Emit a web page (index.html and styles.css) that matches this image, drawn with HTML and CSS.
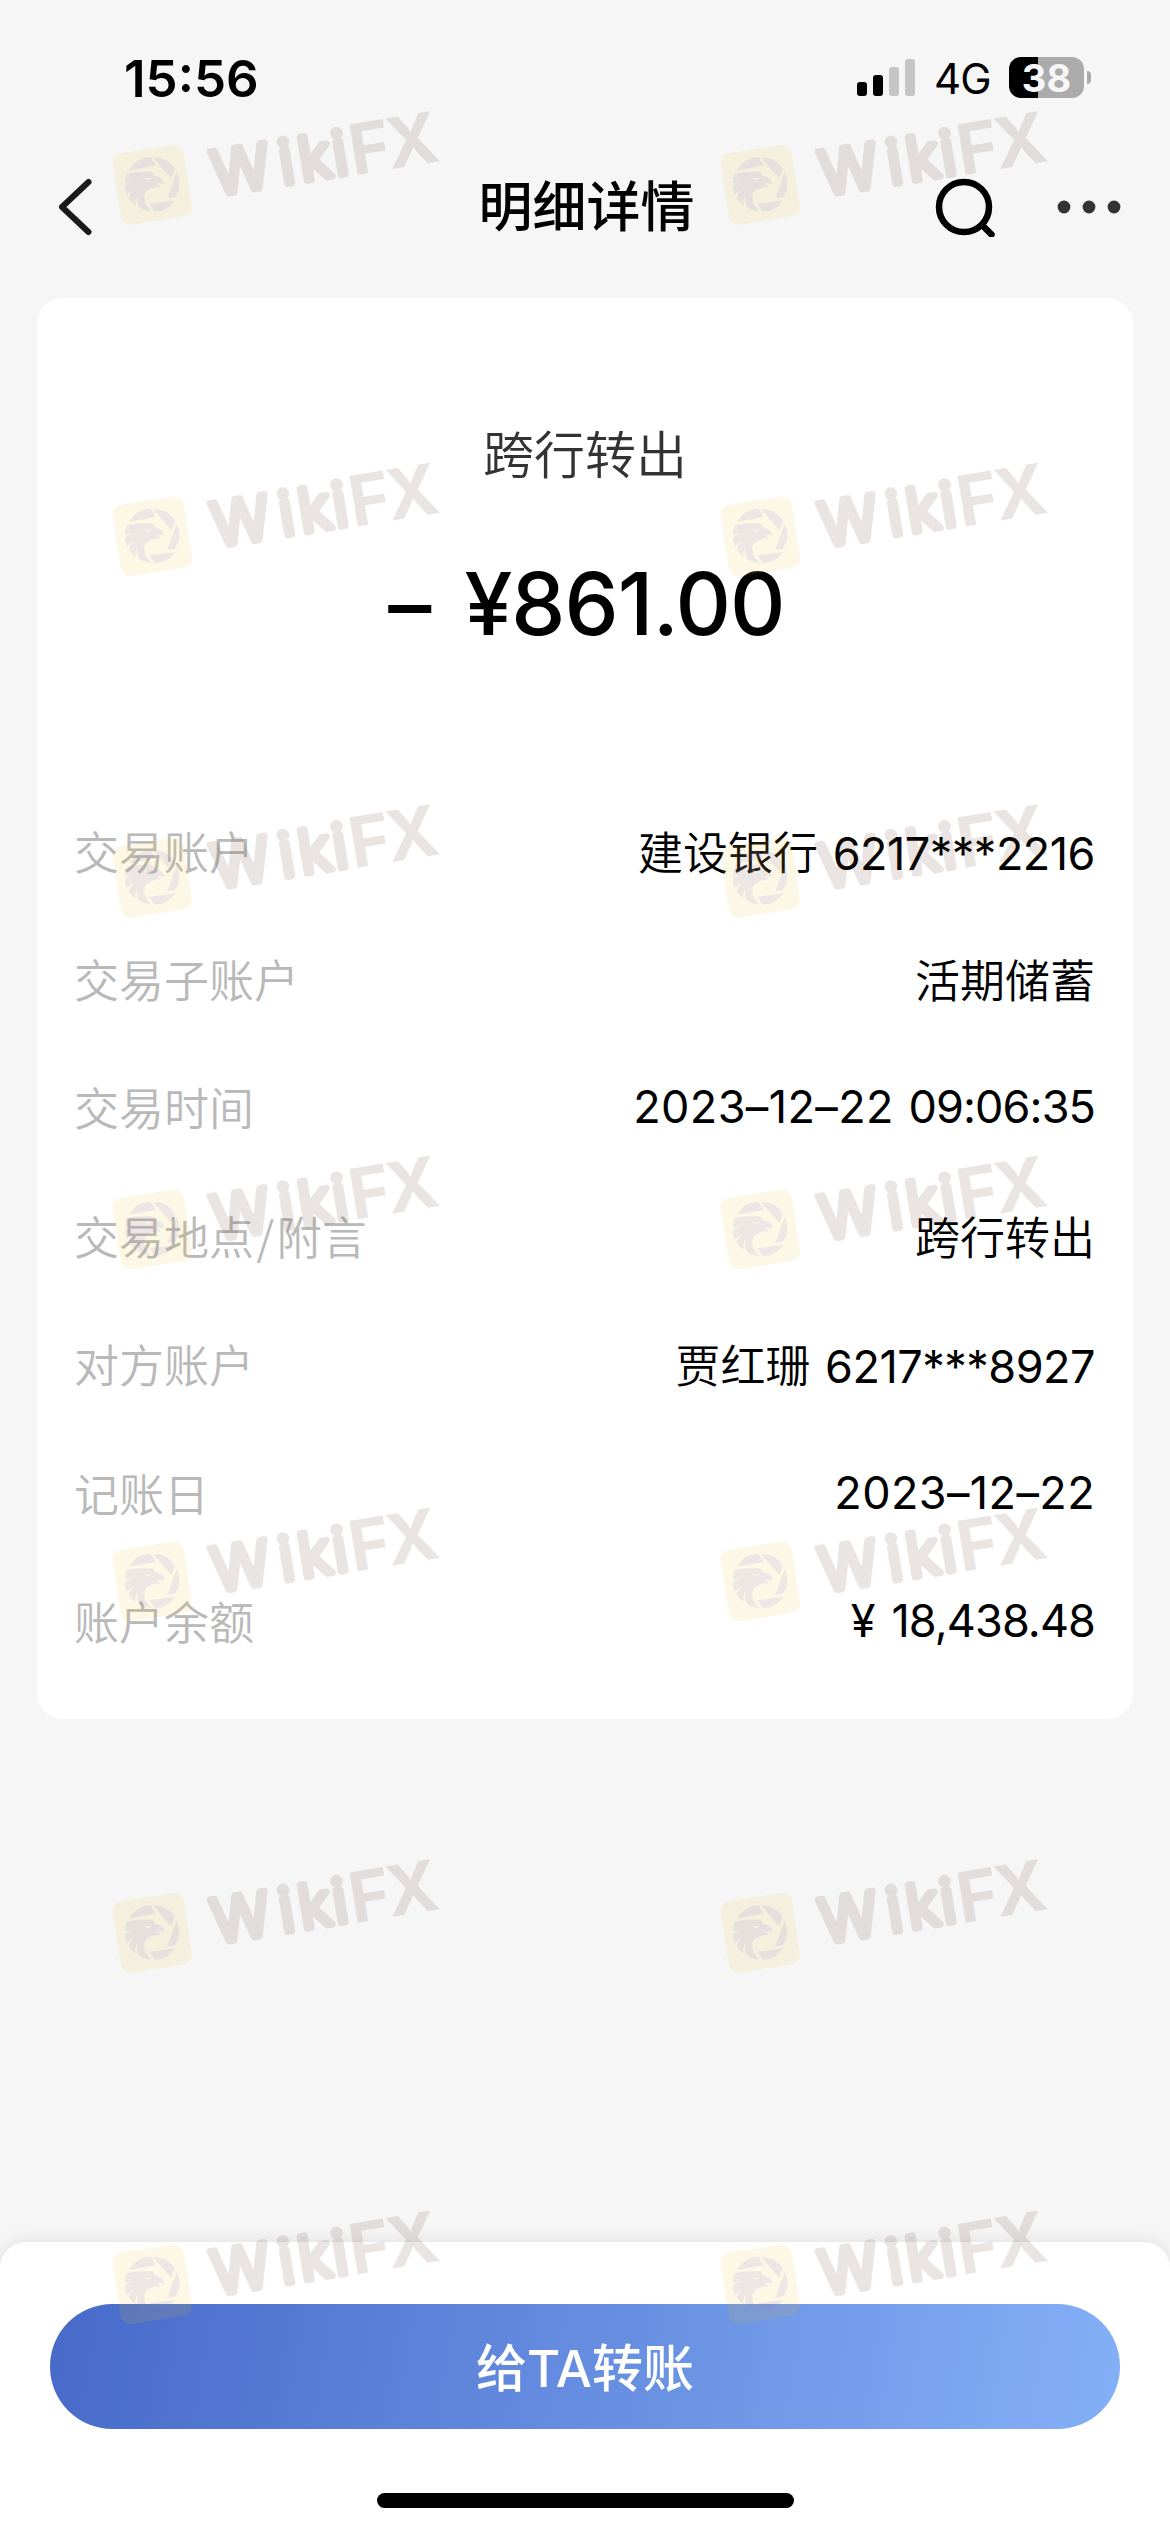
FILE: index.html
```html
<!DOCTYPE html>
<html lang="zh-CN">
<head>
    <meta charset="UTF-8">
    <title>明细详情</title>
    <link rel="stylesheet" href="styles.css">
</head>
<body>
    <div class="status-bar">
        <span class="time">15:56</span>
        <div class="status-icons">
            <svg class="signal" width="58" height="38" viewBox="0 0 58 38">
                <rect x="0" y="23" width="10" height="14" rx="3" />
                <rect x="16" y="16" width="10" height="21" rx="3" />
                <rect class="off" x="32" y="8" width="10" height="29" rx="3" />
                <rect class="off" x="48" y="0" width="10" height="37" rx="3" />
            </svg>
            <span class="network">4G</span>
            <div class="battery">
                <span class="battery-level">38</span>
            </div>
            <span class="battery-nub"></span>
        </div>
    </div>

    <div class="nav-bar">
        <svg class="back" width="60" height="60" viewBox="0 0 60 60">
            <path d="M38.5 5L12 30l26.5 25" />
        </svg>
        <h1>明细详情</h1>
        <div class="nav-actions">
            <svg class="search" width="60" height="60" viewBox="0 0 60 60">
                <circle cx="29" cy="30" r="25" />
                <path d="M48.5 49.5l8 8" />
            </svg>
            <svg class="more" width="64" height="60" viewBox="0 0 64 60">
                <circle cx="7" cy="30" r="6.4" />
                <circle cx="32" cy="30" r="6.4" />
                <circle cx="57" cy="30" r="6.4" />
            </svg>
        </div>
    </div>

    <div class="card">
        <p class="card-type">跨行转出</p>
        <p class="card-amount"><span>–</span><span>¥861.00</span></p>

        <div class="details">
            <div class="row">
                <span class="label">交易账户</span>
                <span class="value">建设银行 <b class="account">6217***2216</b></span>
            </div>
            <div class="row">
                <span class="label">交易子账户</span>
                <span class="value">活期储蓄</span>
            </div>
            <div class="row">
                <span class="label">交易时间</span>
                <span class="value"><b class="date">2023–12–22</b> <b class="clock">09:06:35</b></span>
            </div>
            <div class="row">
                <span class="label">交易地点<i>/</i>附言</span>
                <span class="value">跨行转出</span>
            </div>
            <div class="row">
                <span class="label">对方账户</span>
                <span class="value">贾红珊 <b class="account">6217***8927</b></span>
            </div>
            <div class="row">
                <span class="label">记账日</span>
                <span class="value"><b class="date">2023–12–22</b></span>
            </div>
            <div class="row">
                <span class="label">账户余额</span>
                <span class="value"><b class="money">¥ 18,438.48</b></span>
            </div>
        </div>
    </div>

    <div class="footer">
        <button class="transfer-btn">给TA转账</button>
        <div class="home-indicator"></div>
    </div>

    <!-- Watermark layer -->
    <svg class="watermark" width="1170" height="2532" viewBox="0 0 1170 2532">
        <defs>
            <g id="mark">
                <g transform="scale(0.33333)">
                    <rect class="tile" x="-108" y="-108" width="216" height="216" rx="30" transform="translate(157 259) rotate(-9)" />
                    <g class="ink">
                        <path d="M88 216Q107 178 152 176L167 201Z" />
                        <path d="M159 177Q206 178 224 212L214 240Z" />
                        <path d="M230 222Q249 262 225 296L202 299Z" />
                        <path d="M225 306Q202 340 164 339L148 316Z" />
                        <path d="M79 227C100 219 130 219 155 220Q166 224 162 232C177 232 191 243 193 257Q181 252 170 256L179 262L180 266C158 264 136 274 133 290C129 308 142 326 154 339Q134 338 119 328C111 316 109 304 114 292C105 302 104 312 108 322Q94 312 86 298Q90 284 104 272Q88 279 80 290Q75 276 75 264Q84 253 98 249Q86 250 76 255Q75 240 79 227Z" />
                    </g>
                    <path class="eye" d="M130 236Q143 240 155 238Q149 246 141 244Z" />
                    <g transform="translate(381 298) rotate(-9.3)">
                        <text class="word round" x="-33 172 231 334" y="-13">Wiki</text>
                        <text class="word" x="385 498" y="-5">FX</text>
                    </g>
                </g>
            </g>
        </defs>
        <use href="#mark" x="100" y="98.5" />
        <use href="#mark" x="708" y="98.5" />
        <use href="#mark" x="100" y="450" />
        <use href="#mark" x="708" y="450" />
        <use href="#mark" x="100" y="791.5" />
        <use href="#mark" x="708" y="791.5" />
        <use href="#mark" x="100" y="1143" />
        <use href="#mark" x="708" y="1143" />
        <use href="#mark" x="100" y="1495" />
        <use href="#mark" x="708" y="1495" />
        <use href="#mark" x="100" y="1846.5" />
        <use href="#mark" x="708" y="1846.5" />
        <use href="#mark" x="100" y="2198" />
        <use href="#mark" x="708" y="2198" />
    </svg>
</body>
</html>
```
FILE: styles.css
```css
* {
    margin: 0;
    padding: 0;
    box-sizing: border-box;
}

body {
    position: relative;
    display: flex;
    flex-direction: column;
    width: 1170px;
    height: 2532px;
    overflow: hidden;
    background: #f6f6f6;
    color: #000;
    font-family: Inter, "Noto Sans CJK SC", sans-serif;
}

.status-bar {
    display: flex;
    justify-content: space-between;
    height: 155px;
    padding: 0 79px 0 124px;
}

.time {
    height: 155px;
    line-height: 157px;
    font-size: 51px;
    font-weight: 600;
}

.status-icons {
    display: flex;
    align-items: center;
    height: 155px;
}

.signal .off {
    fill: #c5c5c5;
}

.network {
    width: 56px;
    margin: 2px 19px 0 19px;
    font-size: 42px;
    letter-spacing: -0.9px;
    white-space: nowrap;
}

.battery {
    width: 75px;
    height: 41px;
    border-radius: 12px;
    background: linear-gradient(90deg, #000 29px, #ababab 29px);
    text-align: center;
}

.battery-level {
    display: block;
    line-height: 42px;
    font-size: 38px;
    font-weight: 700;
    color: #f6f6f6;
}

.battery-nub {
    width: 4px;
    height: 13px;
    margin-left: 3px;
    border-radius: 0 4px 4px 0;
    background: #ababab;
}

.nav-bar {
    display: flex;
    align-items: center;
    justify-content: space-between;
    height: 104px;
    padding: 0 49px 0 50px;
}

.back {
    margin-right: 128px;
    fill: none;
    stroke: #1a1a1a;
    stroke-width: 6;
    stroke-linecap: round;
    stroke-linejoin: round;
}

.nav-bar h1 {
    font-size: 54px;
    line-height: 104px;
    font-weight: 500;
    margin-top: 2px;
}

.nav-actions {
    display: flex;
    gap: 62px;
}

.search {
    fill: none;
    stroke: #000;
    stroke-width: 6.5;
    stroke-linecap: round;
}

.more {
    fill: #333;
}

.card {
    height: 1421px;
    margin: 39px 37px 0;
    padding: 120px 38px 0;
    border-radius: 26px;
    background: #fff;
}

.card-type {
    height: 76px;
    line-height: 76px;
    text-align: center;
    font-size: 51px;
    font-weight: 350;
    color: #333;
}

.card-amount {
    display: flex;
    justify-content: center;
    gap: 34px;
    height: 110px;
    margin-top: 55px;
    padding-left: 3px;
    line-height: 110px;
    font-size: 86px;
    font-weight: 500;
    letter-spacing: -0.9px;
}

.details {
    margin-top: 127px;
}

.row {
    display: flex;
    align-items: center;
    justify-content: space-between;
    height: 128.4px;
    font-size: 45px;
}

.label {
    margin-left: -1px;
    color: #b9b9b9;
    font-family: "Noto Sans CJK SC", sans-serif;
    font-weight: 350;
}

.label i {
    padding: 0 2.5px;
    font-style: normal;
}

.value {
    font-weight: 350;
    word-spacing: 2px;
}

.value b {
    font-weight: 375;
}

.account {
    letter-spacing: -0.5px;
}

.date {
    letter-spacing: 0.4px;
}

.clock {
    letter-spacing: -0.9px;
}

.money {
    letter-spacing: -0.9px;
    word-spacing: 5px;
}

.footer {
    height: 290px;
    margin-top: auto;
    padding: 62px 50px 0;
    border-radius: 26px 26px 0 0;
    background: #fff;
    box-shadow: 0 0 20px rgba(0, 0, 0, 0.1);
}

.transfer-btn {
    display: block;
    width: 100%;
    height: 125px;
    padding-bottom: 4px;
    border: none;
    border-radius: 63px;
    background: linear-gradient(100deg, #476ac9, #84b0f7);
    color: #fff;
    font-family: Inter, "Noto Sans CJK SC", sans-serif;
    font-size: 51px;
    font-weight: 500;
}

.home-indicator {
    width: 417px;
    height: 15px;
    margin: 64px auto 0;
    border-radius: 8px;
    background: #000;
}

.watermark {
    position: absolute;
    top: 0;
    left: 0;
    pointer-events: none;
}

.tile {
    fill: rgba(238, 190, 45, 0.12);
}

.ink {
    fill: rgba(122, 116, 230, 0.13);
}

.eye {
    fill: rgba(255, 250, 230, 0.7);
}

.word {
    fill: #583223;
    font-family: Inter, sans-serif;
    font-size: 210px;
    font-weight: 700;
    opacity: 0.12;
}

.round {
    font-size: 180px;
    font-weight: 300;
    stroke: #583223;
    stroke-width: 21;
    stroke-linejoin: round;
}
```
